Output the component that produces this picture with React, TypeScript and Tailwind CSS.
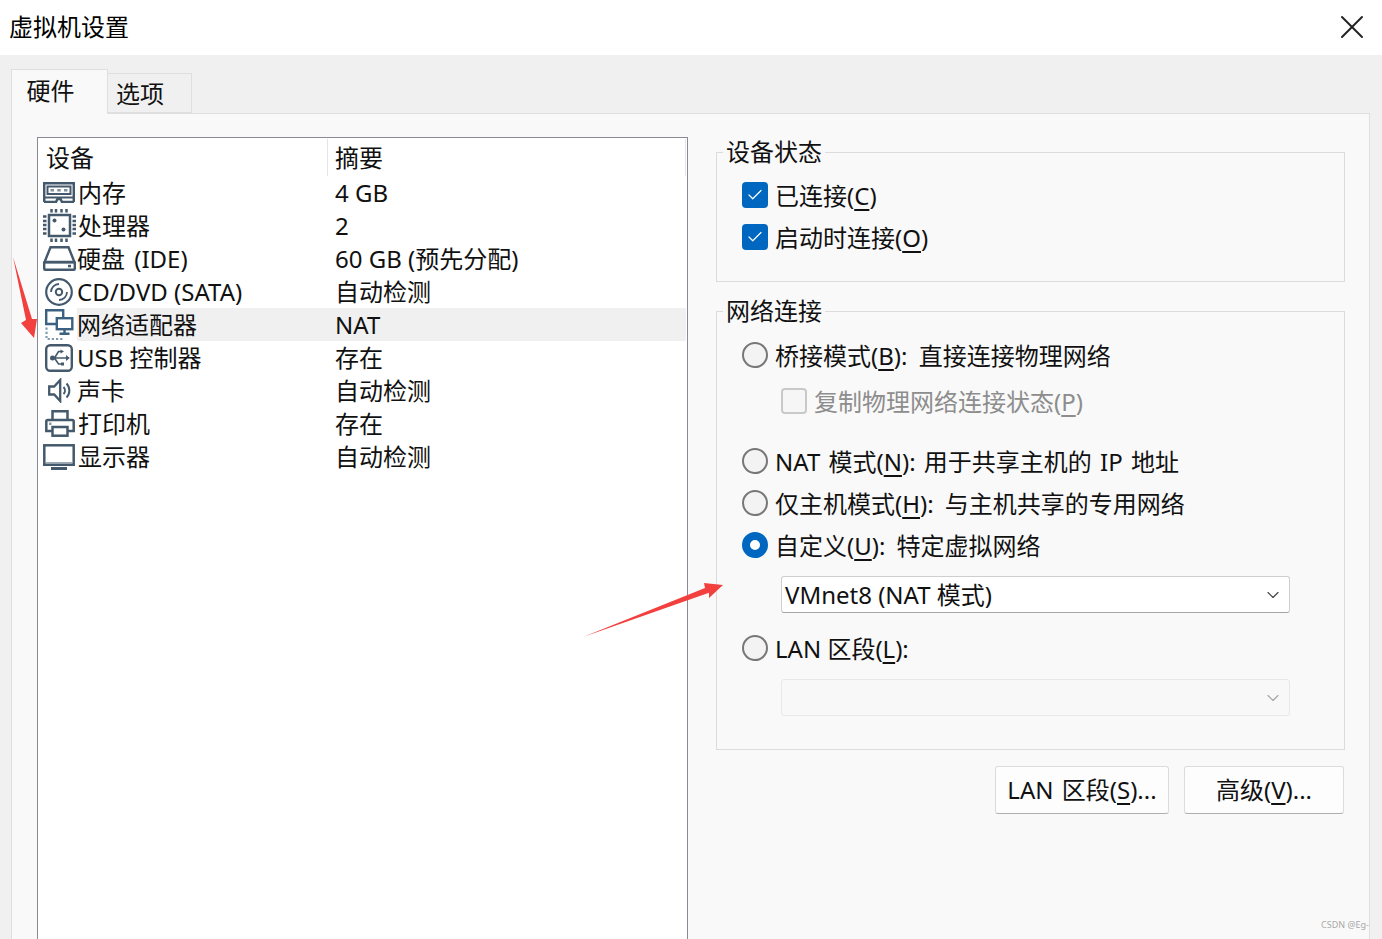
import React from 'react';
import { Check, ChevronDown, X } from 'lucide-react';

const iconColor = '#44596b';

const MemoryIcon = () => (
  <svg width="32" height="21" viewBox="0 0 32 21" fill="none" stroke={iconColor} strokeWidth="2.500">
    <path d="M1.200 20V1.200h29.600V20" />
    <path d="M1 15.500h30" strokeWidth="2" />
    <path d="M1 20h12l1.500-3h3l1.500 3h12" />
    <rect x="4.500" y="4.500" width="23" height="7.500" strokeWidth="2" />
    <path d="M7.500 8.250h3.500M14.250 8.250h3.500M21 8.250h3.500" stroke="#7f8f9c" strokeWidth="2.500" />
  </svg>
);

const CpuIcon = () => (
  <svg width="33" height="33" viewBox="0 0 33 33" fill="none" stroke={iconColor} strokeWidth="2.500">
    <rect x="6" y="6" width="21" height="21" />
    <path d="M8.500 0v3.500M13 0v3.500M18.500 0v3.500M23.500 0v3.500M8.500 29.500V33M13 29.500V33M18.500 29.500V33M23.500 29.500V33" />
    <path d="M0 7.500h3.500M0 12h3.500M0 16h3.500M0 20h3.500M0 24.500h3.500M29.500 7.500H33M29.500 12H33M29.500 16H33M29.500 20H33M29.500 24.500H33" />
    <circle cx="11.500" cy="11.500" r="2" fill={iconColor} stroke="none" />
    <circle cx="20.500" cy="20.500" r="2" fill={iconColor} stroke="none" />
  </svg>
);

const DiskIcon = () => (
  <svg width="33" height="25" viewBox="0 0 33 25" fill="none" stroke={iconColor} strokeWidth="2.400">
    <path d="M7.500 1.200h18l6 15H1.500z" />
    <rect x="1.200" y="16" width="30.600" height="7.800" rx="1" />
    <rect x="25" y="18.800" width="3" height="2.500" fill={iconColor} stroke="none" />
  </svg>
);

const CdIcon = () => (
  <svg width="28" height="28" viewBox="0 0 28 28" fill="none" stroke={iconColor} strokeWidth="2.200">
    <circle cx="14" cy="14" r="12.800" />
    <circle cx="14" cy="14" r="3.200" strokeWidth="2" />
    <path d="M6 14A8 8 0 0 1 14 6M22 14A8 8 0 0 1 14 22" strokeWidth="1.800" />
  </svg>
);

const NetworkIcon = () => (
  <svg width="29" height="31" viewBox="0 0 29 31" fill="none" stroke="#3b6080" strokeWidth="2.400">
    <path d="M11 15H1.200V1.200h17V9" />
    <rect x="11.800" y="9.200" width="15.500" height="11" />
    <path d="M19.500 21v3.500M14.500 24.800h10" />
    <path d="M1.500 18.500V30H19" stroke="#7f9ab0" strokeWidth="2.200" strokeDasharray="2.200 2" />
  </svg>
);

const UsbIcon = () => (
  <svg width="28" height="28" viewBox="0 0 28 28" fill="none" stroke={iconColor} strokeWidth="2.400">
    <rect x="1.200" y="1.200" width="25.600" height="25.600" rx="4" />
    <path d="M8 14h15M9.500 14l4-6.500h3M9.500 14l4 6h3" strokeWidth="1.600" />
    <circle cx="7.500" cy="14" r="2.500" fill={iconColor} stroke="none" />
    <path d="M21 11l3.800 3-3.800 3z" fill={iconColor} stroke="none" />
    <path d="M15.500 5.500l3.500 2-3.500 2z" fill={iconColor} stroke="none" />
    <rect x="16" y="18.500" width="3" height="3" fill={iconColor} stroke="none" />
  </svg>
);

const SoundIcon = () => (
  <svg width="24" height="25" viewBox="0 0 24 25" fill="none" stroke={iconColor} strokeWidth="2.300">
    <path d="M1.200 8.500h5l6-6.500v21l-6-6.500h-5z" />
    <path d="M15.500 9a5 5 0 0 1 0 7M18.500 5.500a10 10 0 0 1 0 14" strokeWidth="2" />
  </svg>
);

const PrinterIcon = () => (
  <svg width="30" height="27" viewBox="0 0 30 27" fill="none" stroke={iconColor} strokeWidth="2.500">
    <path d="M7.500 10V1.300h15V10" />
    <path d="M7 21H1.300V11.500q0-1.500 1.500-1.500h24.400q1.500 0 1.500 1.500V21H23" />
    <rect x="7.500" y="17" width="15" height="8.700" />
    <rect x="4" y="12.500" width="2.500" height="2.500" fill="#8a99a6" stroke="none" />
  </svg>
);

const DisplayIcon = () => (
  <svg width="32" height="26" viewBox="0 0 32 26" fill="none" stroke={iconColor} strokeWidth="2.500">
    <rect x="1.300" y="1.300" width="29.400" height="19.400" />
    <path d="M3 18.800h26" stroke="#9aa6b0" strokeWidth="1.500" />
    <path d="M0 21h32" strokeWidth="2" />
    <path d="M8 24.500h16" strokeWidth="3" />
  </svg>
);

const devices = [
  { icon: <MemoryIcon />, iconBox: 'pl-[5px]', name: '内存', nameBox: 'ml-[1px]', summary: '4 GB' },
  { icon: <CpuIcon />, iconBox: 'pl-[5px]', name: '处理器', nameBox: 'ml-[1px]', summary: '2' },
  { icon: <DiskIcon />, iconBox: 'pl-[5px]', name: '硬盘 (IDE)', nameBox: 'ml-0 [word-spacing:3px]', summary: '60 GB (预先分配)' },
  { icon: <CdIcon />, iconBox: 'pl-[7px]', name: 'CD/DVD (SATA)', nameBox: 'ml-0', summary: '自动检测' },
  { icon: <NetworkIcon />, iconBox: 'pl-[7px]', name: '网络适配器', nameBox: 'ml-0', summary: 'NAT', selected: true },
  { icon: <UsbIcon />, iconBox: 'pl-[7px]', name: 'USB 控制器', nameBox: 'ml-0', summary: '存在' },
  { icon: <SoundIcon />, iconBox: 'pl-[10px]', name: '声卡', nameBox: 'ml-0', summary: '自动检测' },
  { icon: <PrinterIcon />, iconBox: 'pl-[7px]', name: '打印机', nameBox: 'ml-[1px]', summary: '存在' },
  { icon: <DisplayIcon />, iconBox: 'pl-[5px]', name: '显示器', nameBox: 'ml-[1px]', summary: '自动检测' },
];

const Key = ({ children }: { children: React.ReactNode }) => (
  <span className="underline underline-offset-[4px] decoration-[1.500px]">{children}</span>
);

const CheckBox = ({ checked, label }: { checked?: boolean; label: React.ReactNode }) => (
  <div className="flex h-[42px] items-center gap-[7px]">
    {checked ? (
      <span className="flex h-[26px] w-[26px] items-center justify-center rounded-[4px] bg-[#0067c0]">
        <Check className="h-[18px] w-[18px] text-white" strokeWidth={1.600} />
      </span>
    ) : (
      <span className="h-[26px] w-[26px] rounded-[4px] border-2 border-[#c9c9c9] bg-[#f6f6f6]" />
    )}
    <span className={`pt-[2px] ${checked ? 'text-[#111]' : 'text-[#8d8d8d]'}`}>{label}</span>
  </div>
);

const Radio = ({ checked, label, wide }: { checked?: boolean; label: React.ReactNode; wide?: boolean }) => (
  <div className="flex h-[42px] items-center gap-[7px]">
    {checked ? (
      <span className="h-[26px] w-[26px] rounded-full border-[8px] border-[#0067c0] bg-white" />
    ) : (
      <span className="h-[26px] w-[26px] rounded-full border-2 border-[#777] bg-[#f3f3f3]" />
    )}
    <span className={wide ? 'pt-[2px] [word-spacing:5px]' : 'pt-[2px]'}>{label}</span>
  </div>
);

const Group = ({ title, className, children }: { title: string; className: string; children: React.ReactNode }) => (
  <fieldset className={`border border-[#dcdcdc] px-[25px] ${className}`}>
    <legend className="-ml-[19px] bg-[#f9f9f9] px-[3px] leading-[30px]">{title}</legend>
    {children}
  </fieldset>
);

export default function App() {
  return (
    <div className="relative flex h-[939px] w-[1382px] flex-col overflow-hidden bg-[#f0f0f0] text-[24px] text-[#111] [word-spacing:2px] font-['Noto_Sans','Noto_Sans_CJK_SC',sans-serif]">
      {/* Title bar */}
      <div className="flex h-[55px] shrink-0 items-center justify-between bg-white pb-[2px] pl-[9px] pr-[10px] text-black">
        <span>虚拟机设置</span>
        <X className="h-[40px] w-[40px] text-[#222]" strokeWidth={1.200} />
      </div>

      {/* Tabs */}
      <div className="flex h-[58px] shrink-0 items-end pl-[11px]">
        <div className="relative z-10 -mb-[1px] flex h-[45px] w-[97px] justify-center border border-b-0 border-[#dfdfdf] bg-[#f9f9f9] pr-[18px] pt-[3px]">
          硬件
        </div>
        <div className="-ml-[1px] flex h-[40px] w-[85px] justify-center border border-[#dfdfdf] bg-[#f0f0f0] pr-[19px] pt-[2px]">
          选项
        </div>
      </div>

      {/* Panel */}
      <div className="ml-[11px] flex h-[900px] w-[1359px] shrink-0 border border-[#dfdfdf] bg-[#f9f9f9] pl-[25px] pt-[23px]">
        {/* Device list */}
        <div className="w-[651px] shrink-0 border border-[#8a8a94] bg-white [word-spacing:0]">
          <div className="grid h-[38px] grid-cols-[290px_1fr] items-center">
            <div className="border-r border-[#e4e4e4] pl-[8px] pt-[1px] leading-[36px]">设备</div>
            <div className="mr-[1px] border-r border-[#e4e4e4] pl-[7px] pt-[1px] leading-[36px]">摘要</div>
          </div>
          {devices.map((d) => (
            <div key={d.name} className="grid h-[33px] grid-cols-[290px_1fr] leading-[33px]">
              <div className="flex h-[33px] items-center">
                <div className={`flex h-[33px] w-[39px] shrink-0 items-center ${d.iconBox}`}>{d.icon}</div>
                <div className={`h-[33px] flex-1 ${d.selected ? 'bg-[#f0f0f0]' : ''}`}>
                  <span className={d.nameBox}>{d.name}</span>
                </div>
              </div>
              <div className={`h-[33px] pl-[7px] ${d.selected ? 'mr-[1px] bg-[#f0f0f0]' : ''}`}>{d.summary}</div>
            </div>
          ))}
        </div>

        {/* Right column */}
        <div className="ml-[28px] w-[629px] shrink-0">
          <Group title="设备状态" className="h-[145px] pt-[7px]">
            <CheckBox checked label={<>已连接(<Key>C</Key>)</>} />
            <CheckBox checked label={<>启动时连接(<Key>O</Key>)</>} />
          </Group>

          <Group title="网络连接" className="mt-[14px] h-[454px] pt-[8px]">
            <Radio wide label={<>桥接模式(<Key>B</Key>): 直接连接物理网络</>} />
            <div className="ml-[39px] mt-[4px]">
              <CheckBox label={<>复制物理网络连接状态(<Key>P</Key>)</>} />
            </div>
            <div className="mt-[18px]">
              <Radio label={<>NAT 模式(<Key>N</Key>): 用于共享主机的 IP 地址</>} />
            </div>
            <Radio wide label={<>仅主机模式(<Key>H</Key>): 与主机共享的专用网络</>} />
            <Radio checked wide label={<>自定义(<Key>U</Key>): 特定虚拟网络</>} />
            <div className="ml-[39px] mt-[10px] flex h-[37px] w-[509px] items-center justify-between rounded-[3px] border border-[#cfcfcf] border-b-[#a5a5a5] bg-white pl-[3px] pr-[6px]">
              <span className="pt-[1px] [word-spacing:0]">VMnet8 (NAT 模式)</span>
              <ChevronDown className="h-[20px] w-[20px] text-[#444]" strokeWidth={1.400} />
            </div>
            <div className="mt-[14px] [word-spacing:0]">
              <Radio label={<>LAN 区段(<Key>L</Key>):</>} />
            </div>
            <div className="ml-[39px] mt-[10px] flex h-[37px] w-[509px] items-center justify-end rounded-[3px] border border-[#e8e8e8] bg-[#f8f8f8] pr-[6px]">
              <ChevronDown className="h-[20px] w-[20px] text-[#a5a5a5]" strokeWidth={1.400} />
            </div>
          </Group>

          <div className="mt-[16px] flex justify-end gap-[15px] pr-[1px]">
            <div className="flex h-[48px] w-[174px] items-center justify-center rounded-[3px] border border-[#dcdcdc] border-b-[#b0b0b0] bg-[#fdfdfd]">
              <span>LAN 区段(<Key>S</Key>)...</span>
            </div>
            <div className="flex h-[48px] w-[160px] items-center justify-center rounded-[3px] border border-[#dcdcdc] border-b-[#b0b0b0] bg-[#fdfdfd]">
              <span>高级(<Key>V</Key>)...</span>
            </div>
          </div>
        </div>
      </div>

      {/* Red annotation arrows */}
      <svg className="pointer-events-none absolute left-0 top-[250px]" width="40" height="92" viewBox="0 250 40 92">
        <polygon points="13,257 32,319 37,319 34,338 21,323 26,320" fill="#f2403f" />
      </svg>
      <svg className="pointer-events-none absolute left-[580px] top-[580px]" width="146" height="60" viewBox="580 580 146 60">
        <polygon points="583,637 705,588 704,583 723,585 709,598 709,592.700" fill="#f2403f" />
      </svg>

      {/* Watermark */}
      <span className="absolute bottom-[8px] left-[1321px] text-[9px] leading-[12px] text-[#a9a9a9] [word-spacing:0]">CSDN @Eg-</span>
    </div>
  );
}
